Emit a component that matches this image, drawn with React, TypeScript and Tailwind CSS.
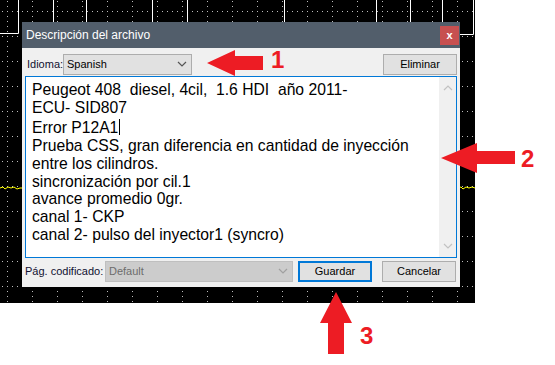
import type { ReactNode } from 'react'

const lines = [
  'Peugeot 408  diesel, 4cil,  1.6 HDI  año 2011-',
  'ECU- SID807',
  'Error P12A1',
  'Prueba CSS, gran diferencia en cantidad de inyección',
  'entre los cilindros.',
  'sincronización por cil.1',
  'avance promedio 0gr.',
  'canal 1- CKP',
  'canal 2- pulso del inyector1 (syncro)',
]

const ui = { fontFamily: '"Liberation Sans", Arial, sans-serif' }

function Chevron({ className, up }: { className?: string; up?: boolean }) {
  return (
    <svg width="10" height="6" viewBox="0 0 10 6" className={className} aria-hidden="true">
      <polyline points={up ? '1,5 5,1 9,5' : '1,1 5,5 9,1'} fill="none" stroke="currentColor" strokeWidth="1.2" />
    </svg>
  )
}

function Button({ children, primary }: { children: ReactNode; primary?: boolean }) {
  return (
    <button
      className={
        primary
          ? 'flex h-[21px] w-[74px] items-center justify-center border-2 border-[#0078d7] bg-[#e1e1e1] text-[11px] text-black'
          : 'flex h-[21px] w-[74px] items-center justify-center border border-[#adadad] bg-[#e1e1e1] text-[11px] text-black'
      }
    >
      {children}
    </button>
  )
}

// oscilloscope grid + traces behind the dialog
function Scope() {
  const traces = [53, 86, 152, 187, 284, 376, 410, 442]
  return (
    <svg width="475" height="303" className="block">
      <defs>
        <pattern id="grid" width="25" height="25" patternUnits="userSpaceOnUse">
          {[2, 7, 12, 17, 22].map((x) => (
            <rect key={'h' + x} x={x} y={11} width="1" height="1" fill="#bdbdbd" />
          ))}
          {[1, 6, 16, 21].map((y) => (
            <rect key={'v' + y} x={7} y={y} width="1" height="1" fill="#bdbdbd" />
          ))}
        </pattern>
      </defs>
      <rect width="475" height="303" fill="#000" />
      <rect width="475" height="303" fill="url(#grid)" />
      <polyline points="18.5,0 18.5,33.5 0,33.5" fill="none" stroke="#fff" strokeWidth="1" />
      <polyline points="473.5,0 473.5,34.5 455,34.5" fill="none" stroke="#fff" strokeWidth="1" />
      {traces.map((x) => (
        <line key={x} x1={x + 0.5} y1="0" x2={x + 0.5} y2="30" stroke="#fff" strokeWidth="1" />
      ))}
      <polyline points="0,188 3,187 5,189 8,187 11,188 14,187 17,189 20,188 24,188" fill="none" stroke="#ffff00" strokeWidth="1" />
      <polyline points="458,188 461,187 463,189 466,187 469,188 472,187 475,188" fill="none" stroke="#ffff00" strokeWidth="1" />
    </svg>
  )
}

function Dialog() {
  return (
    <div className="absolute left-[22px] top-[22px] flex h-[265px] w-[438px] flex-col bg-[#f0f0f0]" style={ui}>
      <div className="flex h-[26px] items-center justify-between bg-[#525e6b] pl-[4px] pr-[1px]">
        <span className="text-[12px] text-white">Descripción del archivo</span>
        <span className="flex h-[19px] w-[19px] items-center justify-center bg-[#c75050] text-[11px] font-bold leading-none text-white">
          x
        </span>
      </div>

      <div className="flex flex-1 flex-col px-[3px] pt-[5px]">
        <div className="flex h-[22px] items-center">
          <span className="ml-[2px] w-[36px] text-[11px] text-[#101030]">Idioma:</span>
          <div className="flex h-[21px] w-[129px] items-center justify-between border border-[#adadad] bg-[#e1e1e1] pl-[3px] pr-[4px]">
            <span className="text-[11px] text-black">Spanish</span>
            <Chevron className="text-[#555]" />
          </div>
          <div className="flex-1" />
          <Button>Eliminar</Button>
        </div>

        <div className="mt-[1px] flex h-[182px] w-[432px] border border-[#0078d7] bg-white">
          <div
            className="flex-1 whitespace-pre pl-[6px] pt-[4px] text-[15.7px] leading-[17.9px] text-black"
            style={{ fontFamily: '"Liberation Sans", Arial, sans-serif' }}
          >
            {lines.map((l, i) => (
              <div key={i}>
                {l}
                {i === 2 && <span className="ml-[1px] inline-block h-[16px] w-[1px] translate-y-[2px] bg-black" />}
              </div>
            ))}
          </div>
          <div className="flex w-[17px] flex-col items-center justify-between bg-[#f0f0f0] py-[8px]">
            <Chevron up className="text-[#c2c2c2]" />
            <Chevron className="text-[#c2c2c2]" />
          </div>
        </div>

        <div className="mt-[2px] flex h-[22px] items-center">
          <span className="w-[80px] text-[11px] text-[#101030]">Pág. codificado:</span>
          <div className="flex h-[21px] w-[188px] items-center justify-between border border-[#bfbfbf] bg-[#cccccc] pl-[3px] pr-[4px]">
            <span className="text-[11px] text-[#6d6d6d]">Default</span>
            <Chevron className="text-[#a0a0a0]" />
          </div>
          <div className="ml-[5px]">
            <Button primary>Guardar</Button>
          </div>
          <div className="ml-[10px]">
            <Button>Cancelar</Button>
          </div>
        </div>
      </div>
    </div>
  )
}

function Arrows() {
  const label = 'absolute text-[24px] font-bold leading-[24px] text-[#ed1c24]'
  return (
    <>
      <svg className="absolute left-0 top-0" width="555" height="365" aria-hidden="true">
        <polygon points="207,63 235,50 235,56 263,56 263,70 235,70 235,76" fill="#ed1c24" />
        <polygon points="441,158 477,143 477,151 515,151 515,164 477,164 477,173" fill="#ed1c24" />
        <polygon points="336,292 352,323 344,323 344,354 328,354 328,323 320,323" fill="#ed1c24" />
      </svg>
      <span className={label + ' left-[271px] top-[48px]'} style={ui}>1</span>
      <span className={label + ' left-[521px] top-[147px]'} style={ui}>2</span>
      <span className={label + ' left-[360px] top-[324px]'} style={ui}>3</span>
    </>
  )
}

export default function App() {
  return (
    <div className="relative h-[365px] w-[555px] overflow-hidden bg-white">
      <Scope />
      <Dialog />
      <Arrows />
    </div>
  )
}
